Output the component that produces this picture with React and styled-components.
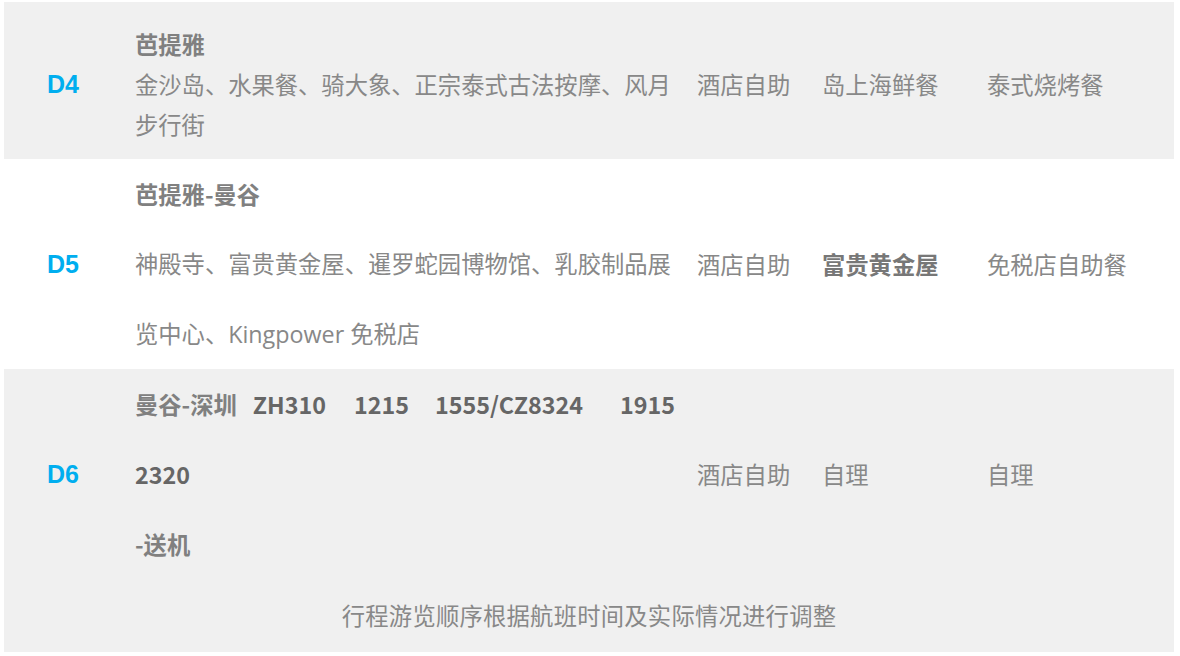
import React from 'react';
import styled, { createGlobalStyle } from 'styled-components';

const GlobalStyle = createGlobalStyle`
  html, body {
    margin: 0;
    padding: 0;
    background: #fff;
  }
  body {
    font-family: "Noto Sans CJK SC", "Noto Sans", sans-serif;
  }
`;

const Page = styled.div`
  padding: 2px 6px 4px 4px;
`;

const Table = styled.div`
  display: flex;
  flex-direction: column;
`;

const Row = styled.div`
  display: grid;
  grid-template-columns: 131px 562px 125px 165px 1fr;
  align-items: center;
  background: ${p => (p.$shaded ? '#f0f0f0' : '#fff')};
  padding: ${p => p.$pad || '0'};
  font-size: 23.3px;
  color: #888;
`;

const Day = styled.div`
  padding-left: 43px;
  font-family: "Liberation Sans", Arial, sans-serif;
  font-weight: 700;
  font-size: 25px;
  color: #00aeef;
`;

const Desc = styled.div`
  padding-right: 12px;
  font-family: "Open Sans", "Noto Sans CJK SC", sans-serif;
  line-height: ${p => p.$lh || '70px'};
`;

const Title = styled.div`
  font-family: "Noto Sans CJK SC", sans-serif;
  font-weight: 700;
  color: #808080;
  line-height: ${p => p.$lh || '70px'};
`;

const Flight = styled.span`
  display: inline-block;
  vertical-align: top;
  line-height: 70px;
  margin-right: ${p => p.$gap || 0}px;
  font-family: "Noto Sans CJK SC", sans-serif;
  font-weight: 700;
  color: ${p => (p.$dark ? '#666' : '#808080')};
`;

const Meal = styled.div`
  line-height: 40px;
  font-weight: ${p => (p.$bold ? 700 : 400)};
  color: ${p => (p.$bold ? '#777' : '#888')};
`;

const Note = styled.div`
  background: #f0f0f0;
  text-align: center;
  font-size: 23.3px;
  letter-spacing: 0.25px;
  line-height: 70px;
  padding: 1px 0 2px;
  color: #888;
`;

const days = [
  {
    day: 'D4',
    shaded: true,
    pad: '21px 0 14px',
    title: '芭提雅',
    titleLh: '42px',
    lh: '40px',
    text: '金沙岛、水果餐、骑大象、正宗泰式古法按摩、风月步行街',
    meals: ['酒店自助', '岛上海鲜餐', '泰式烧烤餐'],
  },
  {
    day: 'D5',
    title: '芭提雅-曼谷',
    text: '神殿寺、富贵黄金屋、暹罗蛇园博物馆、乳胶制品展览中心、Kingpower 免税店',
    meals: ['酒店自助', '富贵黄金屋', '免税店自助餐'],
    boldMeal: 1,
  },
];

const App = () => (
  <Page>
    <GlobalStyle />
    <Table>
      {days.map(d => (
        <Row key={d.day} $shaded={d.shaded} $pad={d.pad}>
          <Day>{d.day}</Day>
          <Desc $lh={d.lh}>
            <Title $lh={d.titleLh}>{d.title}</Title>
            {d.text}
          </Desc>
          {d.meals.map((m, i) => (
            <Meal key={m} $bold={d.boldMeal === i}>{m}</Meal>
          ))}
        </Row>
      ))}
      <Row $shaded>
        <Day>D6</Day>
        <Desc>
          <Flight $gap={16}>曼谷-深圳</Flight>
          <Flight $gap={28} $dark>ZH310</Flight>
          <Flight $gap={26} $dark>1215</Flight>
          <Flight $gap={37} $dark>1555/CZ8324</Flight>
          <Flight $dark>1915</Flight>
          <Flight $dark>2320</Flight>
          <br />
          <Flight>-送机</Flight>
        </Desc>
        <Meal>酒店自助</Meal>
        <Meal>自理</Meal>
        <Meal>自理</Meal>
      </Row>
      <Note>行程游览顺序根据航班时间及实际情况进行调整</Note>
    </Table>
  </Page>
);

export default App;
